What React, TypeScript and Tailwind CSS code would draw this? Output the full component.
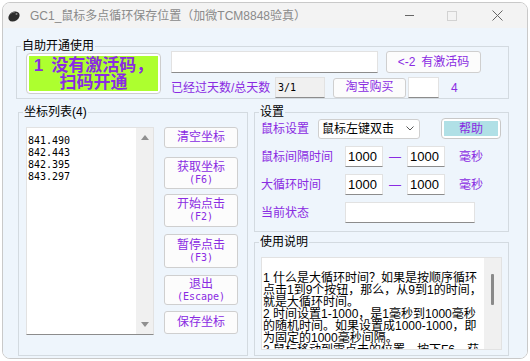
import type { ReactNode } from 'react'

const purple = 'text-[#8a2be2]'

function Group({ label, className, children }: { label: string; className: string; children: ReactNode }) {
  return (
    <div className={`relative shrink-0 border border-[#d3dae0] ${className}`}>
      <span className="absolute -top-[8px] left-[4px] bg-[#eef5fc] px-[1px] text-[12px] leading-[14px] text-black">
        {label}
      </span>
      {children}
    </div>
  )
}

function Btn({ children, className }: { children: ReactNode; className: string }) {
  return (
    <div
      className={`flex shrink-0 flex-col items-center justify-center rounded-[3px] border border-[#cfcfcf] bg-[#fcfcfc] text-[12px] leading-[13px] ${purple} ${className}`}
    >
      {children}
    </div>
  )
}

function Field({ value, className }: { value?: string; className: string }) {
  return (
    <div
      className={`flex shrink-0 items-center border border-[#e2e2e2] border-b-[#8c8c8c] bg-white pl-[2px] text-[13px] leading-[15px] text-black ${className}`}
    >
      {value}
    </div>
  )
}

function Mono({ children }: { children: ReactNode }) {
  return <span className="font-['DejaVu_Sans_Mono','Noto_Sans_CJK_SC',monospace] text-[10px] leading-[12px]">{children}</span>
}

const coords = ['841.490', '842.443', '842.395', '843.297']

const notes = [
  '1 什么是大循环时间？如果是按顺序循环',
  '点击1到9个按钮，那么，从9到1的时间，',
  '就是大循环时间。',
  '2 时间设置1-1000，是1毫秒到1000毫秒',
  '的随机时间。如果设置成1000-1000，即',
  '为固定的1000毫秒间隔。',
  '3 鼠标移动到需点击的位置，按下F6，获',
]

export default function App() {
  return (
    <div className="h-[361px] w-[530px] overflow-hidden bg-white pl-[2px] pt-[2px] font-['Liberation_Sans','Noto_Sans_CJK_SC',sans-serif]">
      <div className="flex h-[357px] w-[526px] flex-col overflow-hidden rounded-[8px] border border-[#c9c9c9]">
        {/* title bar */}
        <div className="flex h-[25px] shrink-0 items-center bg-[#f3f3f3]">
          <svg width="14" height="13" viewBox="0 0 14 13" className="ml-[4px] mt-[1px]">
            <ellipse cx="7" cy="6.5" rx="6" ry="4.6" transform="rotate(-35 7 6.5)" fill="#2d2d2d" />
            <path d="M3 4 Q5 2 8 2" stroke="#777" strokeWidth="1" fill="none" />
            <circle cx="9.5" cy="4" r="1" fill="#888" />
          </svg>
          <span className="ml-[9px] text-[12px] leading-[14px] text-[#8a8a8a]">
            GC1_鼠标多点循环保存位置（加微TCM8848验真）
          </span>
          <div className="ml-auto flex items-center">
            <div className="h-[1px] w-[9px] bg-[#666]" />
            <div className="ml-[33px] h-[10px] w-[10px] border border-[#d2d2d2]" />
            <svg width="11" height="11" viewBox="0 0 11 11" className="ml-[35px] mr-[24px]">
              <path d="M0.5 0.5 L10.5 10.5 M10.5 0.5 L0.5 10.5" stroke="#666" strokeWidth="1" />
            </svg>
          </div>
        </div>

        {/* client */}
        <div className="flex flex-1 flex-col bg-[#eef5fc]">
          <Group label="自助开通使用" className="ml-[13px] mt-[18px] flex h-[53px] w-[493px] items-start">
            <div className="ml-[9px] mt-[6px] h-[41px] w-[135px] shrink-0 rounded-[4px] border border-[#cdcdcd] bg-white p-[2px]">
              <div className="flex h-full w-full flex-col items-center justify-center bg-[#adff2f] text-[17px] font-bold leading-[17px] text-[#8a2be2]">
                <span>
                  <span className="mr-[8px]">1</span>没有激活码，
                </span>
                <span>扫码开通</span>
              </div>
            </div>
            <div className="ml-[10px] mt-[4px] flex flex-col">
              <div className="flex h-[22px]">
                <Field className="h-[22px] w-[207px]" />
                <Btn className="ml-[8px] h-[22px] w-[95px] !flex-row">
                  <span className="mr-[6px]">&lt;-2</span>有激活码
                </Btn>
              </div>
              <div className="mt-[4px] flex h-[21px] items-center">
                <span className={`w-[104px] text-[12px] leading-[14px] ${purple}`}>已经过天数/总天数</span>
                <div className="flex h-[21px] w-[50px] items-center border border-[#e2e2e2] border-b-[#8c8c8c] bg-[#f0f0f0] pl-[2px] text-black">
                  <Mono>3/1</Mono>
                </div>
                <Btn className="ml-[8px] h-[20px] w-[73px]">淘宝购买</Btn>
                <Field className="ml-[2px] h-[21px] w-[31px]" />
                <span className={`ml-[12px] text-[12px] leading-[14px] ${purple}`}>4</span>
              </div>
            </div>
          </Group>

          <div className="mt-[13px] flex">
            {/* coordinate list */}
            <Group label="坐标列表(4)" className="ml-[15px] flex h-[244px] w-[230px] items-start">
              <div className="ml-[7px] mt-[14px] flex h-[208px] w-[128px] shrink-0 border border-[#e2e2e2] border-b-[#8c8c8c] bg-white">
                <div className="flex flex-1 flex-col pl-[1px] pt-[7px] text-black">
                  {coords.map(c => (
                    <Mono key={c}>{c}</Mono>
                  ))}
                </div>
                <div className="flex w-[17px] flex-col items-center justify-between bg-[#f0f0f0] py-[7px]">
                  <svg width="8" height="5" viewBox="0 0 8 5">
                    <path d="M0 5 L4 0 L8 5 Z" fill="#8f8f8f" />
                  </svg>
                  <svg width="8" height="5" viewBox="0 0 8 5">
                    <path d="M0 0 L8 0 L4 5 Z" fill="#8f8f8f" />
                  </svg>
                </div>
              </div>
              <div className="ml-[10px] mt-[14px] flex w-[74px] shrink-0 flex-col">
                <Btn className="h-[21px] w-[74px]">清空坐标</Btn>
                <Btn className="mt-[9px] h-[32px] w-[74px]">
                  <span>获取坐标</span>
                  <Mono>(F6)</Mono>
                </Btn>
                <Btn className="mt-[5px] h-[33px] w-[74px]">
                  <span>开始点击</span>
                  <Mono>(F2)</Mono>
                </Btn>
                <Btn className="mt-[7px] h-[34px] w-[74px]">
                  <span>暂停点击</span>
                  <Mono>(F3)</Mono>
                </Btn>
                <Btn className="mt-[7px] h-[30px] w-[74px]">
                  <span>退出</span>
                  <Mono>(Escape)</Mono>
                </Btn>
                <Btn className="mt-[6px] h-[23px] w-[74px]">保存坐标</Btn>
              </div>
            </Group>

            <div className="ml-[6px] flex w-[255px] flex-col">
              {/* settings */}
              <Group label="设置" className="flex h-[120px] w-[255px] flex-col pl-[6px]">
                <div className="mt-[5px] flex h-[21px] items-center">
                  <span className={`w-[57px] text-[12px] leading-[14px] ${purple}`}>鼠标设置</span>
                  <div className="flex h-[20px] w-[102px] items-center justify-between rounded-[3px] border border-[#cfcfcf] bg-white pl-[3px] pr-[5px] text-[12px] leading-[14px] text-black">
                    <span>鼠标左键双击</span>
                    <svg width="8" height="5" viewBox="0 0 8 5">
                      <path d="M0.5 0.5 L4 4 L7.5 0.5" stroke="#555" strokeWidth="1" fill="none" />
                    </svg>
                  </div>
                  <div className="ml-[21px] h-[21px] w-[60px] rounded-[4px] border border-[#c8c8c8] bg-white p-[2px]">
                    <div className={`flex h-full w-full items-center justify-center bg-[#b0e0e6] text-[12px] leading-[14px] ${purple}`}>
                      帮助
                    </div>
                  </div>
                </div>
                {['鼠标间隔时间', '大循环时间'].map(label => (
                  <div key={label} className="mt-[7px] flex h-[21px] items-center">
                    <span className={`w-[84px] text-[12px] leading-[14px] ${purple}`}>{label}</span>
                    <Field value="1000" className="h-[21px] w-[38px]" />
                    <span className={`ml-[6px] w-[12px] text-[12px] leading-[14px] ${purple}`}>—</span>
                    <Field value="1000" className="ml-[6px] h-[21px] w-[38px]" />
                    <span className={`ml-[14px] text-[12px] leading-[14px] ${purple}`}>毫秒</span>
                  </div>
                ))}
                <div className="mt-[7px] flex h-[21px] items-center">
                  <span className={`w-[84px] text-[12px] leading-[14px] ${purple}`}>当前状态</span>
                  <Field className="h-[21px] w-[130px]" />
                </div>
              </Group>

              {/* notes */}
              <Group label="使用说明" className="mt-[10px] flex h-[114px] w-[255px] items-start">
                <div className="ml-[6px] mt-[14px] flex h-[93px] w-[241px] shrink-0 border border-[#e2e2e2] bg-white">
                  <div className="flex flex-1 flex-col overflow-hidden whitespace-nowrap pl-[1px] pt-[14px] text-[12px] leading-[12px] text-black">
                    {notes.map(n => (
                      <span key={n}>{n}</span>
                    ))}
                  </div>
                  <div className="flex w-[17px] shrink-0 justify-center bg-[#f0f0f0] pt-[16px]">
                    <div className="h-[31px] w-[3px] rounded-[1px] bg-[#8a8a8a]" />
                  </div>
                </div>
              </Group>
            </div>
          </div>
        </div>
      </div>
    </div>
  )
}
